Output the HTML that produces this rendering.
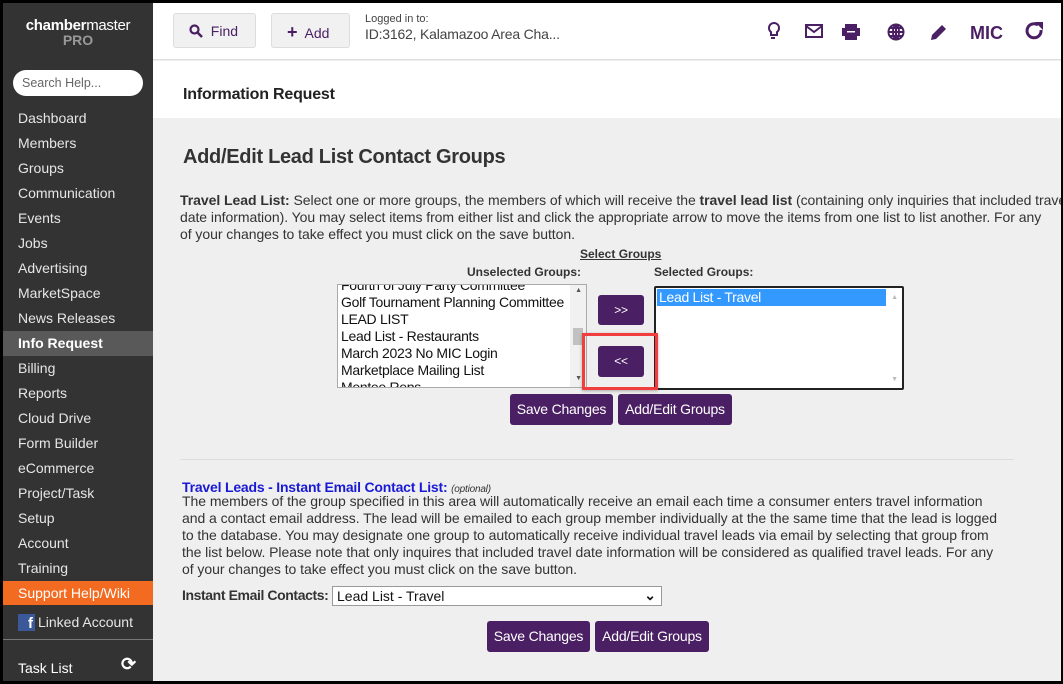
<!DOCTYPE html>
<html><head><meta charset="utf-8"><style>
*{margin:0;padding:0;box-sizing:border-box}
body{width:1063px;height:684px;overflow:hidden;background:#000;font-family:"Liberation Sans",sans-serif;position:relative}
.a{position:absolute}
#side{left:3px;top:3px;width:150px;height:678px;background:#333}
.nav{position:absolute;left:15px;color:#e6e6e6;font-size:14px}
#main{left:153px;top:3px;width:908px;height:678px;background:#efefef;overflow:hidden}
.btn{position:absolute;background:#4a1f63;color:#fff;font-size:14px;text-align:center;border-radius:3px;letter-spacing:-0.2px}
.t{font-size:14px;color:#333;line-height:17px;letter-spacing:-0.05px;white-space:nowrap}
.li{font-size:14px;color:#111;line-height:17px;white-space:nowrap;letter-spacing:-0.3px}
</style></head><body>
<div id="side" class="a">
 <div class="a" style="left:0;top:14px;width:150px;text-align:center;color:#fff;font-size:15px;font-weight:bold;letter-spacing:-0.3px">chamber<span style="font-weight:normal">master</span></div>
 <div class="a" style="left:0;top:29px;width:150px;text-align:center;color:#999;font-size:14px;font-weight:bold">PRO</div>
 <div class="a" style="left:10px;top:67px;width:130px;height:26px;background:#fff;border-radius:13px;font-size:12.5px;color:#666;padding:6px 0 0 9px">Search Help...</div>
 <div class="nav" style="top:107px">Dashboard</div>
 <div class="nav" style="top:132px">Members</div>
 <div class="nav" style="top:157px">Groups</div>
 <div class="nav" style="top:182px">Communication</div>
 <div class="nav" style="top:207px">Events</div>
 <div class="nav" style="top:232px">Jobs</div>
 <div class="nav" style="top:257px">Advertising</div>
 <div class="nav" style="top:282px">MarketSpace</div>
 <div class="nav" style="top:307px">News Releases</div>
 <div class="a" style="left:0;top:328px;width:150px;height:25px;background:#595959"></div>
 <div class="nav" style="top:332px;color:#fff;font-weight:bold">Info Request</div>
 <div class="nav" style="top:357px">Billing</div>
 <div class="nav" style="top:382px">Reports</div>
 <div class="nav" style="top:407px">Cloud Drive</div>
 <div class="nav" style="top:432px">Form Builder</div>
 <div class="nav" style="top:457px">eCommerce</div>
 <div class="nav" style="top:482px">Project/Task</div>
 <div class="nav" style="top:507px">Setup</div>
 <div class="nav" style="top:532px">Account</div>
 <div class="nav" style="top:557px">Training</div>
 <div class="a" style="left:0;top:578px;width:150px;height:24px;background:#f26b21"></div>
 <div class="nav" style="top:582px;color:#fff">Support Help/Wiki</div>
 <div class="a" style="left:15px;top:611px;width:17px;height:17px;background:#3b5998;color:#fff;font-weight:bold;font-size:15px;text-align:right;padding-right:2px;line-height:19px">f</div>
 <div class="nav" style="top:611px;left:35px">Linked Account</div>
 <div class="a" style="left:0;top:636px;width:150px;height:1px;background:#777"></div>
 <div class="nav" style="top:657px;color:#fff">Task List</div>
 <div class="a" style="left:118px;top:651px;color:#fff;font-size:18px;font-weight:bold">⟳</div>
</div>
<div id="main" class="a">
 <div class="a" style="left:0;top:0;width:908px;height:57px;background:#fff;border-bottom:1px solid #ddd"></div>
 <div class="a" style="left:20px;top:10px;width:83px;height:35px;background:#f1f1f1;border:1px solid #ddd;border-radius:3px;font-size:14px;color:#4a1f63;padding:9px 0 0 15px"><svg width="14" height="14" viewBox="0 0 14 14" style="vertical-align:-2px"><circle cx="5.5" cy="5.5" r="4" fill="none" stroke="#4a1f63" stroke-width="2.2"/><path d="M8.5 8.5L13 13" stroke="#4a1f63" stroke-width="2.5"/></svg>&nbsp; Find</div>
 <div class="a" style="left:118px;top:10px;width:79px;height:35px;background:#f1f1f1;border:1px solid #ddd;border-radius:3px;font-size:14px;color:#4a1f63;padding:8px 0 0 15px"><b style="font-size:18px">+</b>&nbsp; Add</div>
 <div class="a" style="left:212px;top:10px;font-size:11px;color:#444">Logged in to:</div>
 <div class="a" style="left:212px;top:23px;font-size:14px;color:#444;letter-spacing:-0.2px">ID:3162, Kalamazoo Area Cha...</div>
 <svg class="a" style="left:612px;top:17px" width="300" height="24" viewBox="0 0 300 24">
  <g fill="none" stroke="#4a1f63" stroke-width="2">
   <path d="M4 8a5 5 0 1 1 8 4v3h-6v-3a5 5 0 0 1-2-4z"/><path d="M6 18h4"/>
   <rect x="41" y="5" width="16" height="12"/><path d="M41 6l8 6 8-6"/>
   <path d="M123 12h16M131 4v16M124 8h14M124 16h14"/><circle cx="131" cy="12" r="7.5"/><ellipse cx="131" cy="12" rx="3" ry="7.5"/>
  </g>
  <path d="M80 4h12v4h3v8h-3v4H80v-4h-3V8h3z" fill="#4a1f63"/><rect x="82" y="11" width="8" height="1.5" fill="#fff"/>
  <path d="M166 20l1-5 10-10 4 4-10 10z" fill="#4a1f63"/>
  <text x="205" y="19" font-family="Liberation Sans" font-weight="bold" font-size="18" fill="#4a1f63">MIC</text>
  <path d="M273 5a7 7 0 1 0 3 5" fill="none" stroke="#4a1f63" stroke-width="3"/><path d="M270 2h8v8z" fill="#4a1f63"/>
 </svg>
 <div class="a" style="left:0;top:58px;width:908px;height:57px;background:#fff"></div>
 <div class="a" style="left:30px;top:83px;font-size:16px;font-weight:bold;color:#222;letter-spacing:-0.2px">Information Request</div>
 <div class="a" style="left:30px;top:143px;font-size:20px;font-weight:bold;color:#333;letter-spacing:-0.3px">Add/Edit Lead List Contact Groups</div>
 <div class="a t" style="left:27px;top:189px"><b>Travel Lead List:</b> Select one or more groups, the members of which will receive the <b>travel lead list</b> (containing only inquiries that included travel<br>date information). You may select items from either list and click the appropriate arrow to move the items from one list to list another. For any<br>of your changes to take effect you must click on the save button.</div>
 <div class="a" style="left:427px;top:244px;font-size:12px;font-weight:bold;color:#333;text-decoration:underline">Select Groups</div>
 <div class="a" style="left:314px;top:262px;font-size:12px;font-weight:bold;color:#333">Unselected Groups:</div>
 <div class="a" style="left:501px;top:262px;font-size:12px;font-weight:bold;color:#333">Selected Groups:</div>
 <div class="a" style="left:184px;top:281px;width:250px;height:104px;background:#fff;border:1px solid #aaa;overflow:hidden">
  <div class="a li" style="left:3px;top:-8px">Fourth of July Party Committee</div>
  <div class="a li" style="left:3px;top:9px">Golf Tournament Planning Committee</div>
  <div class="a li" style="left:3px;top:26px">LEAD LIST</div>
  <div class="a li" style="left:3px;top:43px">Lead List - Restaurants</div>
  <div class="a li" style="left:3px;top:60px">March 2023 No MIC Login</div>
  <div class="a li" style="left:3px;top:77px">Marketplace Mailing List</div>
  <div class="a li" style="left:3px;top:94px">Mentee Reps</div>
  <div class="a" style="right:0;top:0;width:16px;height:102px;background:#f1f1f1"></div>
  <div class="a" style="right:3px;top:43px;width:10px;height:17px;background:#c1c1c1"></div>
  <div class="a" style="right:4px;top:2px;font-size:7px;color:#555">▲</div>
  <div class="a" style="right:4px;top:90px;font-size:7px;color:#555">▼</div>
 </div>
 <div class="btn" style="left:445px;top:292px;width:46px;height:30px;line-height:30px;font-size:12px">&gt;&gt;</div>
 <div class="a" style="left:501px;top:283px;width:250px;height:104px;background:#fff;border:2px solid #222;border-radius:2px;overflow:hidden">
  <div class="a li" style="left:1px;top:1px;width:229px;height:17px;background:#3399ff;color:#fff;padding-left:2px">Lead List - Travel</div>
  <div class="a" style="right:4px;top:6px;font-size:7px;color:#bbb">▲</div>
  <div class="a" style="right:4px;top:88px;font-size:7px;color:#bbb">▼</div>
 </div>
 <div class="a" style="left:429px;top:330px;width:76px;height:57px;border:3px solid #f03e3e;box-shadow:0 1px 3px rgba(0,0,0,.3)"></div>
 <div class="btn" style="left:445px;top:343px;width:46px;height:31px;line-height:31px;font-size:12px">&lt;&lt;</div>
 <div class="btn" style="left:357px;top:391px;width:103px;height:31px;line-height:31px">Save Changes</div>
 <div class="btn" style="left:465px;top:391px;width:114px;height:31px;line-height:31px">Add/Edit Groups</div>
 <div class="a" style="left:27px;top:456px;width:834px;height:1px;background:#ddd"></div>
 <div class="a" style="left:29px;top:476px;font-size:14px;font-weight:bold;color:#1a1ad6;letter-spacing:-0.2px">Travel Leads - Instant Email Contact List: <i style="font-size:10px;font-weight:normal;color:#333">(optional)</i></div>
 <div class="a t" style="left:29px;top:490px">The members of the group specified in this area will automatically receive an email each time a consumer enters travel information<br>and a contact email address. The lead will be emailed to each group member individually at the the same time that the lead is logged<br>to the database. You may designate one group to automatically receive individual travel leads via email by selecting that group from<br>the list below. Please note that only inquires that included travel date information will be considered as qualified travel leads. For any<br>of your changes to take effect you must click on the save button.</div>
 <div class="a" style="left:29px;top:584px;font-size:14px;font-weight:bold;color:#333;letter-spacing:-0.4px">Instant Email Contacts:</div>
 <div class="a" style="left:179px;top:583px;width:330px;height:20px;background:#fff;border:1px solid #999;font-size:14px;color:#111;padding:1px 0 0 4px">Lead List - Travel<span class="a" style="right:5px;top:0;font-weight:bold">⌄</span></div>
 <div class="btn" style="left:334px;top:618px;width:103px;height:31px;line-height:31px">Save Changes</div>
 <div class="btn" style="left:442px;top:618px;width:114px;height:31px;line-height:31px">Add/Edit Groups</div>
</div>
</body></html>
